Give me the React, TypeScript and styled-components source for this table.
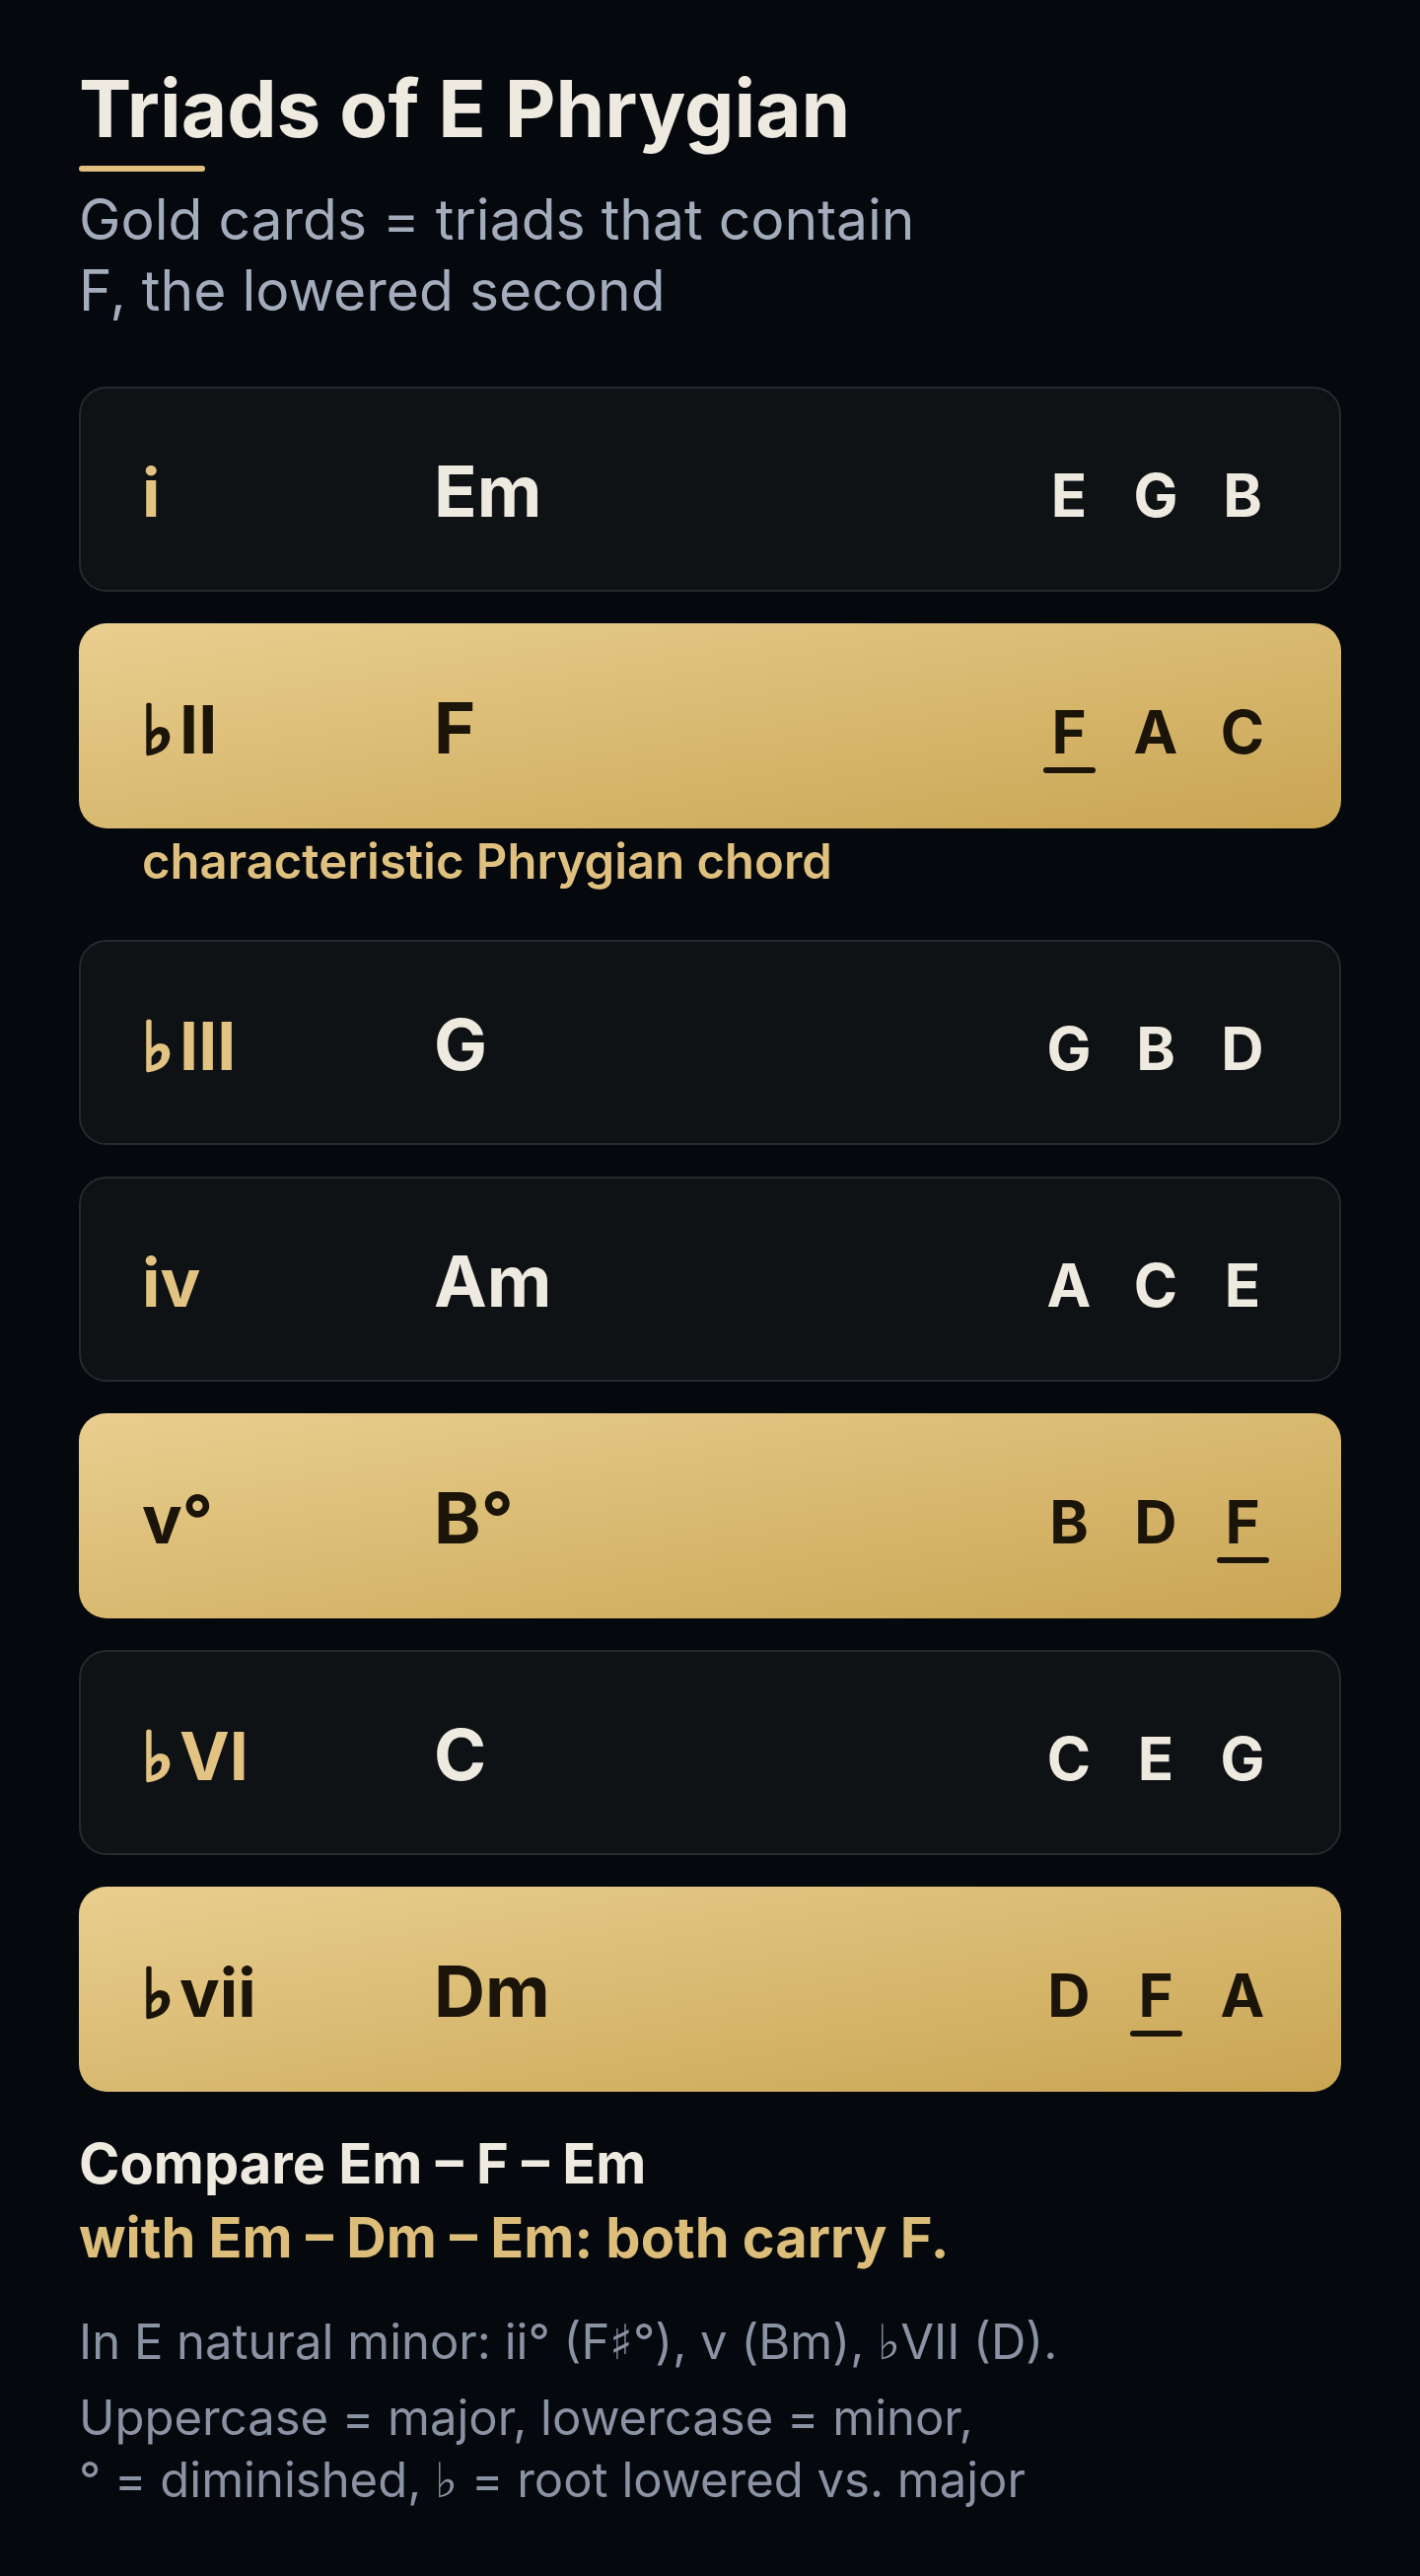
import React from 'react'
import styled, { createGlobalStyle, css } from 'styled-components'

type Chord = {
  numeral: string
  name: string
  notes: string[]
  caption?: string
}

const CHORDS: Chord[] = [
  { numeral: 'i', name: 'Em', notes: ['E', 'G', 'B'] },
  { numeral: '♭II', name: 'F', notes: ['F', 'A', 'C'], caption: 'characteristic Phrygian chord' },
  { numeral: '♭III', name: 'G', notes: ['G', 'B', 'D'] },
  { numeral: 'iv', name: 'Am', notes: ['A', 'C', 'E'] },
  { numeral: 'v°', name: 'B°', notes: ['B', 'D', 'F'] },
  { numeral: '♭VI', name: 'C', notes: ['C', 'E', 'G'] },
  { numeral: '♭vii', name: 'Dm', notes: ['D', 'F', 'A'] },
]

const TARGET = 'F'
const FLAT = '♭'

function RomanNumeral({ value, gold }: { value: string; gold: boolean }) {
  const flat = value.startsWith(FLAT)
  return (
    <Numeral $gold={gold}>
      {flat && <Flat>{FLAT}</Flat>}
      {flat ? value.slice(1) : value}
    </Numeral>
  )
}

export default function App() {
  return (
    <Page>
      <Global />
      <Header>
        <Title>Triads of E Phrygian</Title>
        <TitleBar />
        <Subtitle>Gold cards = triads that contain F, the lowered second</Subtitle>
      </Header>

      <ChordList>
        {CHORDS.map((chord) => {
          const gold = chord.notes.includes(TARGET)
          return (
            <ChordItem key={chord.numeral}>
              <Card $gold={gold}>
                <RomanNumeral value={chord.numeral} gold={gold} />
                <ChordName $gold={gold}>{chord.name}</ChordName>
                <Notes>
                  {chord.notes.map((note) => (
                    <Note key={note} $gold={gold} $marked={note === TARGET}>
                      {note}
                    </Note>
                  ))}
                </Notes>
              </Card>
              {chord.caption && <Caption>{chord.caption}</Caption>}
            </ChordItem>
          )
        })}
      </ChordList>

      <Compare>
        <span>Compare Em – F – Em</span>
        <CompareGold>with Em – Dm – Em: both carry F.</CompareGold>
      </Compare>

      <Footnote>In E natural minor: ii° (F♯°), v (Bm), ♭VII (D).</Footnote>
      <Footnote>
        Uppercase = major, lowercase = minor,
        <br />° = diminished, ♭ = root lowered vs. major
      </Footnote>
    </Page>
  )
}

const Global = createGlobalStyle`
  * {
    box-sizing: border-box;
  }

  html, body, #root {
    margin: 0;
    padding: 0;
    background: #05080d;
    font-family: Inter, 'DejaVu Sans', sans-serif;
  }
`

const Page = styled.div`
  min-height: 100vh;
  padding: 64px 80px 66px;
  background: #05080d;
  color: #efeae0;
`

const Header = styled.header`
  margin-bottom: 61px;
`

const Title = styled.h1`
  margin: 0;
  font-size: 80px;
  line-height: 1.15;
  font-weight: 700;
  color: #efeae0;
`

const TitleBar = styled.div`
  width: 128px;
  height: 6px;
  margin-top: 12px;
  border-radius: 3px;
  background: #dfc07e;
`

const Subtitle = styled.p`
  max-width: 880px;
  margin: 13px 0 0;
  font-size: 57px;
  line-height: 72px;
  color: #a3acbd;
`

const ChordList = styled.div`
  display: flex;
  flex-direction: column;
  gap: 32px;
`

const ChordItem = styled.div`
  display: flex;
  flex-direction: column;
`

const Card = styled.div<{ $gold: boolean }>`
  display: grid;
  grid-template-columns: 296px 1fr auto;
  align-items: baseline;
  align-content: center;
  height: 208px;
  padding: 4px 70px 0 62px;
  border-radius: 28px;
  border: 2px solid #26292d;
  background: #0f1215;

  ${(p) =>
    p.$gold &&
    css`
      border-color: transparent;
      background: linear-gradient(to bottom right, #e9ce8f, #c9a553) border-box;
    `}
`

const Numeral = styled.span<{ $gold: boolean }>`
  font-size: 68px;
  line-height: 1;
  font-weight: 700;
  color: ${(p) => (p.$gold ? '#1b1408' : '#e2c381')};
`

/* the flat sign comes from DejaVu; thicken it to sit with the bold numerals */
const Flat = styled.span`
  font-family: 'DejaVu Sans', sans-serif;
  font-weight: 400;
  -webkit-text-stroke: 3.5px currentColor;
  margin-right: 6px;
`

const ChordName = styled.span<{ $gold: boolean }>`
  font-size: 72px;
  line-height: 1;
  font-weight: 700;
  color: ${(p) => (p.$gold ? '#1b1408' : '#efeae0')};
`

const Notes = styled.div`
  display: flex;
  gap: 32px;
`

const Note = styled.span<{ $gold: boolean; $marked: boolean }>`
  position: relative;
  width: 56px;
  text-align: center;
  font-size: 60px;
  line-height: 1;
  font-weight: 700;
  color: ${(p) => (p.$gold ? '#1b1408' : '#efeae0')};

  ${(p) =>
    p.$marked &&
    css`
      &::after {
        content: '';
        position: absolute;
        left: 2px;
        right: 1px;
        bottom: -12px;
        height: 6px;
        border-radius: 3px;
        background: #1b1408;
      }
    `}
`

const Caption = styled.div`
  margin: 2px 0 15px 64px;
  font-size: 49px;
  line-height: 64px;
  font-weight: 600;
  color: #dfc07e;
`

const Compare = styled.p`
  margin: 36px 0 0;
  font-size: 56px;
  line-height: 75px;
  font-weight: 700;
  color: #efeae0;

  span {
    display: block;
  }
`

const CompareGold = styled.span`
  color: #dcbd7a;
`

const Footnote = styled.p`
  margin: 36px 0 0;
  font-size: 49px;
  line-height: 63px;
  color: #8a92a3;

  & + & {
    margin-top: 14px;
  }
`
